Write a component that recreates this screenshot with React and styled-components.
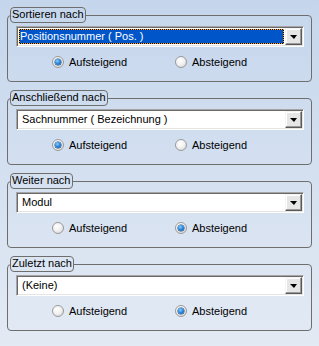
import React from "react";
import styled, { createGlobalStyle } from "styled-components";

const Global = createGlobalStyle`
  html, body { margin: 0; padding: 0; }
  body { font-family: "Liberation Sans", Arial, sans-serif; font-size: 11px; }
`;

const Page = styled.div`
  width: 319px;
  height: 346px;
  box-sizing: border-box;
  padding: 7px 7px 0 7px;
  background: linear-gradient(#c5d6ec, #e3eaf4);
  display: flex;
  flex-direction: column;
  gap: 8px;
  color: #000;
`;

const Group = styled.fieldset`
  margin: 0;
  padding: 0;
  border: 1px solid #6e6e6e;
  border-radius: 4px;
  min-width: 0;
`;

const Legend = styled.legend`
  margin-left: 2px;
  padding: 0 1px;
  height: 16px;
  box-sizing: border-box;
  border: 1px solid #6e6e6e;
  border-radius: 4px;
  line-height: 13px;
  font-size: 11px;
  white-space: nowrap;
`;

const Body = styled.div`
  padding: 3px 7px 10px 8px;
`;

const Combo = styled.div`
  height: 21px;
  box-sizing: border-box;
  display: flex;
  align-items: stretch;
  background: #fff;
  border: 1px solid;
  border-color: #a5a5a5 #ffffff #ffffff #a5a5a5;
  box-shadow: inset 1px 1px 0 #6a6a6a, inset -1px -1px 0 #e4e4e4;
  padding: 1px;
`;

const Field = styled.div`
  flex: 1;
  display: flex;
  align-items: center;
  padding: 1px 1px 1px 1px;
  min-width: 0;
  background: ${p => (p.$selected ? "#000" : "transparent")};
  margin: 1px 1px 1px 1px;
`;

const FieldText = styled.div`
  flex: 1;
  align-self: stretch;
  display: flex;
  align-items: center;
  box-sizing: border-box;
  padding-left: ${p => (p.$selected ? "0px" : "1px")};
  margin: ${p => (p.$selected ? "-1px" : "0")};
  border: ${p => (p.$selected ? "1px dotted #ffa81e" : "1px solid transparent")};
  background: ${p => (p.$selected ? "#0055c9" : "transparent")};
  background-clip: padding-box;
  color: ${p => (p.$selected ? "#fff" : "#000")};
  white-space: nowrap;
  line-height: 13px;
`;

const DropButton = styled.div`
  width: 17px;
  box-sizing: border-box;
  background: #e6e6e6;
  border: 1px solid;
  border-color: #f4f4f4 #5a5a5a #5a5a5a #f4f4f4;
  box-shadow: inset -1px -1px 0 #9a9a9a, inset 1px 1px 0 #ffffff;
  display: flex;
  align-items: center;
  justify-content: center;
`;

const Arrow = styled.span`
  width: 0;
  height: 0;
  border-left: 4px solid transparent;
  border-right: 3px solid transparent;
  border-top: 4px solid #000;
  margin-top: 1px;
`;

const Options = styled.div`
  display: grid;
  grid-template-columns: 123px auto;
  padding-left: 36px;
  margin-top: 6px;
  height: 18px;
  align-items: center;
`;

const Option = styled.label`
  display: flex;
  align-items: center;
  gap: 5px;
  white-space: nowrap;
`;

const RadioDot = styled.span`
  width: 12px;
  height: 12px;
  box-sizing: border-box;
  border-radius: 50%;
  border: 1px solid #9a9a9a;
  background: radial-gradient(circle at 40% 35%, #ffffff 0%, #f2f2f2 45%, #cfcfcf 100%);
  display: flex;
  align-items: center;
  justify-content: center;
  &::after {
    content: "";
    display: ${p => (p.$checked ? "block" : "none")};
    width: 6px;
    height: 6px;
    border-radius: 50%;
    background: radial-gradient(circle at 40% 35%, #8fd0ff 0%, #2a8ae0 45%, #0b4f9c 100%);
    box-shadow: 0 0 0 0.5px #1c3f6e;
  }
`;

const groups = [
  { title: "Sortieren nach", value: "Positionsnummer ( Pos. )", selected: true, desc: false },
  { title: "Anschließend nach", value: "Sachnummer ( Bezeichnung )", selected: false, desc: false },
  { title: "Weiter nach", value: "Modul", selected: false, desc: true },
  { title: "Zuletzt nach", value: "(Keine)", selected: false, desc: true },
];

export default function App() {
  return (
    <>
      <Global />
      <Page>
        {groups.map(g => (
          <Group key={g.title}>
            <Legend>{g.title}</Legend>
            <Body>
              <Combo>
                <Field $selected={g.selected}>
                  <FieldText $selected={g.selected}>{g.value}</FieldText>
                </Field>
                <DropButton>
                  <Arrow />
                </DropButton>
              </Combo>
              <Options>
                <Option>
                  <RadioDot $checked={!g.desc} />
                  Aufsteigend
                </Option>
                <Option>
                  <RadioDot $checked={g.desc} />
                  Absteigend
                </Option>
              </Options>
            </Body>
          </Group>
        ))}
      </Page>
    </>
  );
}
